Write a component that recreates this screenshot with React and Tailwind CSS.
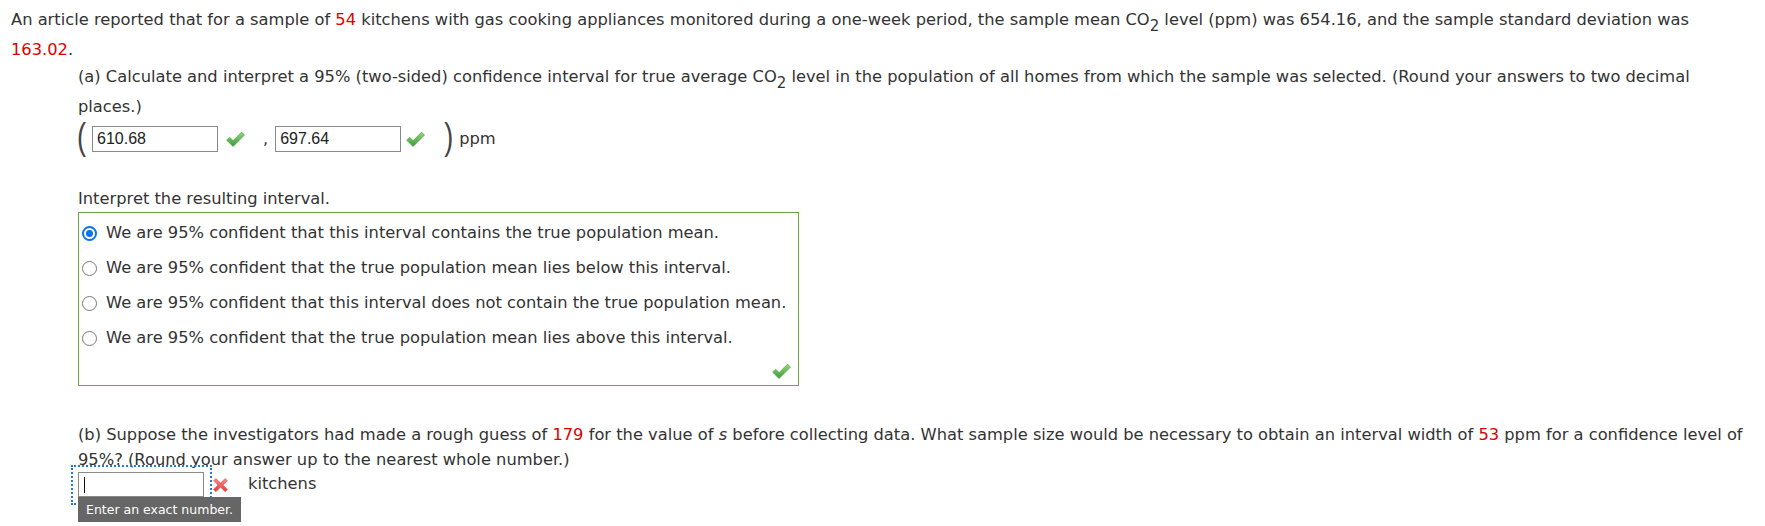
import React from "react";

const R = ({ children }) => <span className="text-[#e10000]">{children}</span>;
const Sub = ({ children }) => (
  <span className="relative top-[6px] text-[15px]">{children}</span>
);

function Check({ id }) {
  return (
    <svg width="19" height="17" viewBox="0 0 19 17" className="shrink-0">
      <defs>
        <linearGradient id={id} x1="0" y1="0" x2="0" y2="1">
          <stop offset="0" stopColor="#92d87e" />
          <stop offset="1" stopColor="#3c9a38" />
        </linearGradient>
      </defs>
      <path
        d="M0.6 9.2 L3.6 6.2 L7.1 9.6 L15.6 1.1 L18.5 4.1 L7.1 15.6 Z"
        fill={`url(#${id})`}
        stroke="#4f9f43"
        strokeWidth="0.6"
        strokeLinejoin="round"
      />
    </svg>
  );
}

function Cross() {
  return (
    <svg width="17" height="16" viewBox="0 0 17 16" className="shrink-0">
      <defs>
        <linearGradient id="xg" x1="0" y1="0" x2="0" y2="1">
          <stop offset="0" stopColor="#f78b8b" />
          <stop offset="1" stopColor="#e23b3b" />
        </linearGradient>
      </defs>
      <path
        d="M1.5 3.8 L3.8 1.5 L8.5 6 L13.2 1.5 L15.5 3.8 L11 8 L15.5 12.4 L13.2 14.7 L8.5 10.2 L3.8 14.7 L1.5 12.4 L6 8 Z"
        fill="url(#xg)"
        stroke="#e45353"
        strokeWidth="0.6"
        strokeLinejoin="round"
      />
    </svg>
  );
}

function Radio({ checked }) {
  if (checked) {
    return (
      <span className="flex h-[15px] w-[15px] shrink-0 items-center justify-center rounded-full border-2 border-[#0b72f0] bg-white">
        <span className="h-[7px] w-[7px] rounded-full bg-[#0b72f0]" />
      </span>
    );
  }
  return (
    <span className="h-[15px] w-[15px] shrink-0 rounded-full border border-[#7a7a7a] bg-white" />
  );
}

const Paren = ({ children }) => (
  <span className="inline-block scale-y-[1.35] font-['Liberation_Sans',sans-serif] text-[27px] leading-none text-[#444]">
    {children}
  </span>
);

const Field = ({ value }) => (
  <div className="flex h-[26px] w-[126px] shrink-0 items-center border border-[#8a8a8a] bg-white pl-[4px] font-['Liberation_Sans',Arial,sans-serif] text-[16px] text-[#222]">
    {value}
  </div>
);

const options = [
  "We are 95% confident that this interval contains the true population mean.",
  "We are 95% confident that the true population mean lies below this interval.",
  "We are 95% confident that this interval does not contain the true population mean.",
  "We are 95% confident that the true population mean lies above this interval.",
];

export default function App() {
  return (
    <div className="min-h-[526px] overflow-hidden whitespace-nowrap bg-white px-[11px] pt-[5px] font-['DejaVu_Sans',Verdana,sans-serif] text-[16.3px] text-[#333]">
      <p className="leading-[29px]">
        An article reported that for a sample of <R>54</R> kitchens with gas
        cooking appliances monitored during a one-week period, the sample mean
        CO<Sub>2</Sub> level (ppm) was 654.16, and the sample standard deviation
        was
        <br />
        <R>163.02</R>.
      </p>

      <div className="ml-[67px]">
        <p className="-mt-[2px] leading-[29px]">
          (a) Calculate and interpret a 95% (two-sided) confidence interval for
          true average CO<Sub>2</Sub> level in the population of all homes from
          which the sample was selected. (Round your answers to two decimal
          <br />
          places.)
        </p>
        <div className="flex h-[36px] items-center">
          <span className="-ml-[1px]">
            <Paren>(</Paren>
          </span>
          <span className="ml-[6px]">
            <Field value="610.68" />
          </span>
          <span className="ml-[8px]">
            <Check id="c1" />
          </span>
          <span className="ml-[18px]">,</span>
          <span className="ml-[7px]">
            <Field value="697.64" />
          </span>
          <span className="ml-[5px]">
            <Check id="c2" />
          </span>
          <span className="ml-[19px]">
            <Paren>)</Paren>
          </span>
          <span className="ml-[6px]">ppm</span>
        </div>

        <p className="mt-[29px] leading-[26px]">Interpret the resulting interval.</p>
        <div className="w-[721px] border border-[#6ba544] pt-[3px]">
          {options.map((o, i) => (
            <div key={i} className="flex h-[35px] items-center pl-[3px]">
              <Radio checked={i === 0} />
              <span className="ml-[9px]">{o}</span>
            </div>
          ))}
          <div className="flex h-[29px] justify-end pr-[7px] pt-[7px]">
            <Check id="c3" />
          </div>
        </div>

        <p className="mt-[36px] leading-[25px]">
          (b) Suppose the investigators had made a rough guess of <R>179</R> for
          the value of <i>s</i> before collecting data. What sample size would be
          necessary to obtain an interval width of <R>53</R> ppm for a confidence
          level of
          <br />
          95%? (Round your answer up to the nearest whole number.)
        </p>
        <div className="flex items-center">
          <div className="relative">
            <span className="pointer-events-none absolute -bottom-[8px] -left-[7px] -right-[8px] -top-[7px] border-2 border-dotted border-[#1f7bd3]" />
            <div className="relative h-[25px] w-[126px] border border-[#8a8a8a] bg-white">
              <span className="absolute left-[5px] top-[4px] h-[16px] w-px bg-[#111]" />
            </div>
            <div className="absolute left-0 top-full z-10 whitespace-nowrap bg-[#666] px-[8px] text-[12.5px] leading-[25px] text-white">
              Enter an exact number.
            </div>
          </div>
          <span className="ml-[8px]">
            <Cross />
          </span>
          <span className="ml-[19px]">kitchens</span>
        </div>
      </div>
    </div>
  );
}
